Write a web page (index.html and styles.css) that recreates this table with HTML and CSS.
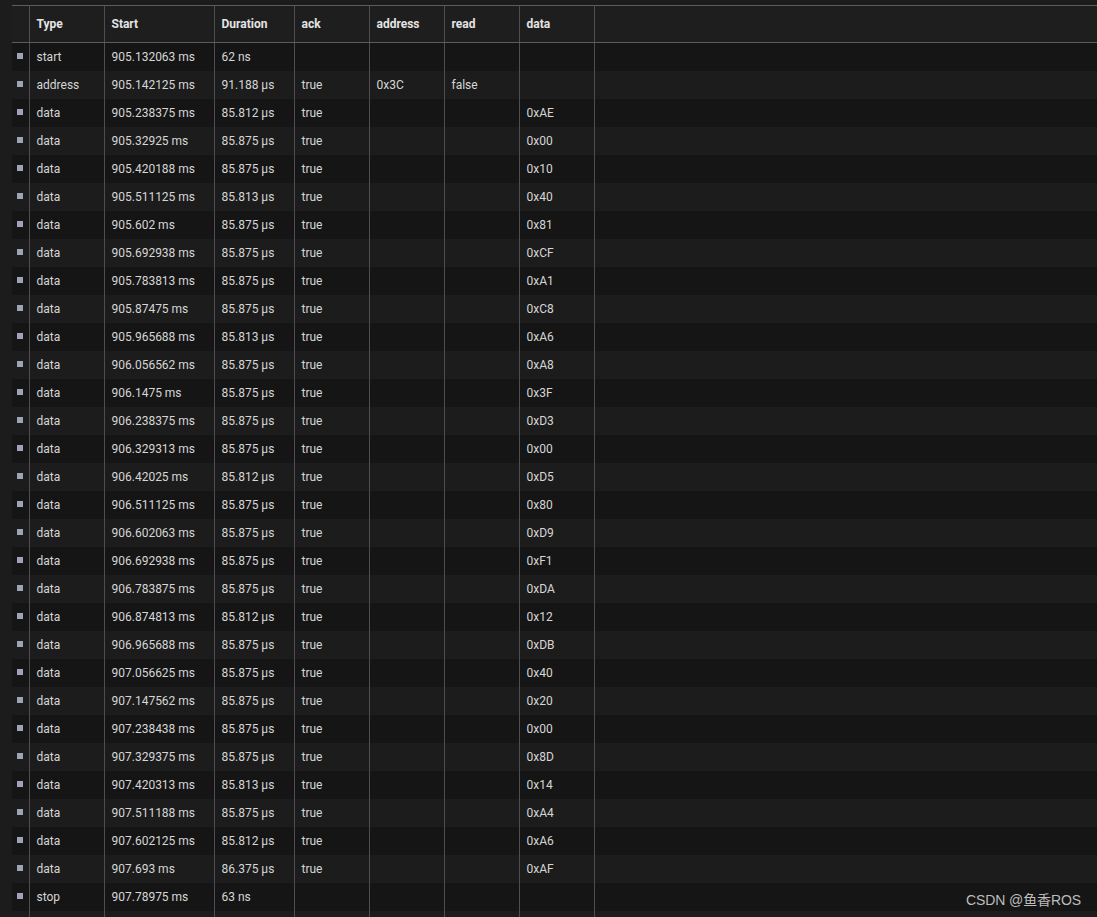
FILE: index.html
```html
<!DOCTYPE html>
<html>
<head>
<meta charset="utf-8">
<link rel="stylesheet" href="styles.css">
</head>
<body>
<table class="grid">
  <colgroup>
    <col class="c-mark"><col class="c-type"><col class="c-start"><col class="c-dur"><col class="c-ack"><col class="c-addr"><col class="c-read"><col class="c-data"><col class="c-rest">
  </colgroup>
  <thead>
    <tr><th></th><th>Type</th><th>Start</th><th>Duration</th><th>ack</th><th>address</th><th>read</th><th>data</th><th></th></tr>
  </thead>
  <tbody>
    <tr><td><span class="mark"></span></td><td>start</td><td>905.132063 ms</td><td>62 ns</td><td></td><td></td><td></td><td></td><td></td></tr>
    <tr><td><span class="mark"></span></td><td>address</td><td>905.142125 ms</td><td>91.188 µs</td><td>true</td><td>0x3C</td><td>false</td><td></td><td></td></tr>
    <tr><td><span class="mark"></span></td><td>data</td><td>905.238375 ms</td><td>85.812 µs</td><td>true</td><td></td><td></td><td>0xAE</td><td></td></tr>
    <tr><td><span class="mark"></span></td><td>data</td><td>905.32925 ms</td><td>85.875 µs</td><td>true</td><td></td><td></td><td>0x00</td><td></td></tr>
    <tr><td><span class="mark"></span></td><td>data</td><td>905.420188 ms</td><td>85.875 µs</td><td>true</td><td></td><td></td><td>0x10</td><td></td></tr>
    <tr><td><span class="mark"></span></td><td>data</td><td>905.511125 ms</td><td>85.813 µs</td><td>true</td><td></td><td></td><td>0x40</td><td></td></tr>
    <tr><td><span class="mark"></span></td><td>data</td><td>905.602 ms</td><td>85.875 µs</td><td>true</td><td></td><td></td><td>0x81</td><td></td></tr>
    <tr><td><span class="mark"></span></td><td>data</td><td>905.692938 ms</td><td>85.875 µs</td><td>true</td><td></td><td></td><td>0xCF</td><td></td></tr>
    <tr><td><span class="mark"></span></td><td>data</td><td>905.783813 ms</td><td>85.875 µs</td><td>true</td><td></td><td></td><td>0xA1</td><td></td></tr>
    <tr><td><span class="mark"></span></td><td>data</td><td>905.87475 ms</td><td>85.875 µs</td><td>true</td><td></td><td></td><td>0xC8</td><td></td></tr>
    <tr><td><span class="mark"></span></td><td>data</td><td>905.965688 ms</td><td>85.813 µs</td><td>true</td><td></td><td></td><td>0xA6</td><td></td></tr>
    <tr><td><span class="mark"></span></td><td>data</td><td>906.056562 ms</td><td>85.875 µs</td><td>true</td><td></td><td></td><td>0xA8</td><td></td></tr>
    <tr><td><span class="mark"></span></td><td>data</td><td>906.1475 ms</td><td>85.875 µs</td><td>true</td><td></td><td></td><td>0x3F</td><td></td></tr>
    <tr><td><span class="mark"></span></td><td>data</td><td>906.238375 ms</td><td>85.875 µs</td><td>true</td><td></td><td></td><td>0xD3</td><td></td></tr>
    <tr><td><span class="mark"></span></td><td>data</td><td>906.329313 ms</td><td>85.875 µs</td><td>true</td><td></td><td></td><td>0x00</td><td></td></tr>
    <tr><td><span class="mark"></span></td><td>data</td><td>906.42025 ms</td><td>85.812 µs</td><td>true</td><td></td><td></td><td>0xD5</td><td></td></tr>
    <tr><td><span class="mark"></span></td><td>data</td><td>906.511125 ms</td><td>85.875 µs</td><td>true</td><td></td><td></td><td>0x80</td><td></td></tr>
    <tr><td><span class="mark"></span></td><td>data</td><td>906.602063 ms</td><td>85.875 µs</td><td>true</td><td></td><td></td><td>0xD9</td><td></td></tr>
    <tr><td><span class="mark"></span></td><td>data</td><td>906.692938 ms</td><td>85.875 µs</td><td>true</td><td></td><td></td><td>0xF1</td><td></td></tr>
    <tr><td><span class="mark"></span></td><td>data</td><td>906.783875 ms</td><td>85.875 µs</td><td>true</td><td></td><td></td><td>0xDA</td><td></td></tr>
    <tr><td><span class="mark"></span></td><td>data</td><td>906.874813 ms</td><td>85.812 µs</td><td>true</td><td></td><td></td><td>0x12</td><td></td></tr>
    <tr><td><span class="mark"></span></td><td>data</td><td>906.965688 ms</td><td>85.875 µs</td><td>true</td><td></td><td></td><td>0xDB</td><td></td></tr>
    <tr><td><span class="mark"></span></td><td>data</td><td>907.056625 ms</td><td>85.875 µs</td><td>true</td><td></td><td></td><td>0x40</td><td></td></tr>
    <tr><td><span class="mark"></span></td><td>data</td><td>907.147562 ms</td><td>85.875 µs</td><td>true</td><td></td><td></td><td>0x20</td><td></td></tr>
    <tr><td><span class="mark"></span></td><td>data</td><td>907.238438 ms</td><td>85.875 µs</td><td>true</td><td></td><td></td><td>0x00</td><td></td></tr>
    <tr><td><span class="mark"></span></td><td>data</td><td>907.329375 ms</td><td>85.875 µs</td><td>true</td><td></td><td></td><td>0x8D</td><td></td></tr>
    <tr><td><span class="mark"></span></td><td>data</td><td>907.420313 ms</td><td>85.813 µs</td><td>true</td><td></td><td></td><td>0x14</td><td></td></tr>
    <tr><td><span class="mark"></span></td><td>data</td><td>907.511188 ms</td><td>85.875 µs</td><td>true</td><td></td><td></td><td>0xA4</td><td></td></tr>
    <tr><td><span class="mark"></span></td><td>data</td><td>907.602125 ms</td><td>85.812 µs</td><td>true</td><td></td><td></td><td>0xA6</td><td></td></tr>
    <tr><td><span class="mark"></span></td><td>data</td><td>907.693 ms</td><td>86.375 µs</td><td>true</td><td></td><td></td><td>0xAF</td><td></td></tr>
    <tr><td><span class="mark"></span></td><td>stop</td><td>907.78975 ms</td><td>63 ns</td><td></td><td></td><td></td><td></td><td></td></tr>
    <tr class="filler"><td></td><td></td><td></td><td></td><td></td><td></td><td></td><td></td><td></td></tr>
  </tbody>
</table>
<div class="watermark">CSDN @鱼香ROS</div>
</body>
</html>
```
FILE: styles.css
```css
html, body {
  margin: 0;
  padding: 0;
  background: #1c1c1c;
  overflow: hidden;
  height: 917px;
}
body {
  padding: 5px 0 0 12px;
  box-sizing: border-box;
  font-family: Roboto, "Liberation Sans", "Noto Sans CJK SC", sans-serif;
  position: relative;
}
.grid {
  border-collapse: collapse;
  table-layout: fixed;
  width: 1085px;
  font-size: 12px;
  color: #d6d6d6;
}
.c-mark { width: 17px; }
.c-type { width: 75px; }
.c-start { width: 110px; }
.c-dur { width: 80px; }
.c-ack, .c-addr, .c-read, .c-data { width: 75px; }
.c-rest { width: auto; }
.grid th {
  height: 36px;
  padding: 0 7px;
  text-align: left;
  font-weight: bold;
  color: #e4e4e4;
  background: #1e1e1e;
  border-top: 1px solid #5c5c5c;
  border-bottom: 1px solid #5c5c5c;
  border-left: 1px solid #4e4e50;
  white-space: nowrap;
}
.grid th:first-child { border-left: none; }
.grid td {
  height: 28px;
  padding: 0 7px;
  border-left: 1px solid #4e4e50;
  white-space: nowrap;
  line-height: 28px;
}
.grid td:first-child {
  border-left: none;
  padding: 0;
  text-align: center;
}
.grid tbody tr:nth-child(odd) { background: #151515; }
.grid tbody tr:nth-child(even) { background: #1c1c1c; }
.mark {
  display: inline-block;
  width: 6px;
  height: 6px;
  background: #9ea3b8;
  vertical-align: middle;
  margin-top: -3px;
}
.watermark {
  position: absolute;
  right: 16px;
  top: 889px;
  font-size: 14px;
  letter-spacing: -0.1px;
  color: #bdbdbd;
  font-family: "Liberation Sans", "Noto Sans CJK SC", sans-serif;
}
```
